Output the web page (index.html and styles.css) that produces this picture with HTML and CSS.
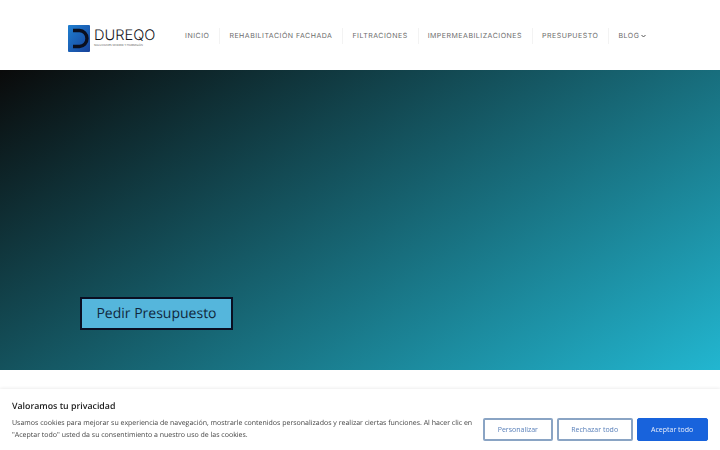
FILE: index.html
```html
<!DOCTYPE html>
<html lang="es">
<head>
<meta charset="utf-8">
<title>Dureqo</title>
<link rel="stylesheet" href="styles.css">
</head>
<body>
<header class="header">
  <a class="logo" href="#">
    <svg class="logo-mark" width="22" height="27" viewBox="0 0 22 27" aria-hidden="true">
      <defs>
        <linearGradient id="lg" x1="0" y1="0" x2="1" y2="1">
          <stop offset="0" stop-color="#1f7fd0"/>
          <stop offset="1" stop-color="#17419a"/>
        </linearGradient>
      </defs>
      <rect width="22" height="27" rx="1" fill="url(#lg)"/>
      <path d="M5 5.5h6.5a7.5 8 0 0 1 0 16H5" fill="none" stroke="#0b0f1e" stroke-width="3.4"/>
    </svg>
    <span class="logo-text">
      <span class="logo-name">DUREQO</span>
      <span class="logo-tag">SOLUCIONES MADRID Y HORMIGÓN</span>
    </span>
  </a>
  <nav class="nav">
    <a class="nav-item" href="#">INICIO</a>
    <a class="nav-item" href="#">REHABILITACIÓN FACHADA</a>
    <a class="nav-item" href="#">FILTRACIONES</a>
    <a class="nav-item" href="#">IMPERMEABILIZACIONES</a>
    <a class="nav-item" href="#">PRESUPUESTO</a>
    <a class="nav-item" href="#">BLOG
      <svg class="chev" width="5" height="4" viewBox="0 0 5 4" aria-hidden="true"><path d="M.5 1l2 2 2-2" fill="none" stroke="#555" stroke-width="1"/></svg>
    </a>
  </nav>
</header>
<main class="hero">
  <a class="cta" href="#">Pedir Presupuesto</a>
</main>
<section class="after"></section>
<aside class="cookie">
  <div class="cookie-copy">
    <h2 class="cookie-title">Valoramos tu privacidad</h2>
    <p class="cookie-text">Usamos cookies para mejorar su experiencia de navegación, mostrarle contenidos personalizados y realizar ciertas funciones. Al hacer clic en "Aceptar todo" usted da su consentimiento a nuestro uso de las cookies.</p>
  </div>
  <div class="cookie-actions">
    <button class="btn btn-custom">Personalizar</button>
    <button class="btn btn-reject">Rechazar todo</button>
    <button class="btn btn-accept">Aceptar todo</button>
  </div>
</aside>
</body>
</html>
```
FILE: styles.css
```css
* { box-sizing: border-box; }
html, body { margin: 0; padding: 0; height: 450px; overflow: hidden; background: #fff; }
body { font-family: "Open Sans", sans-serif; text-rendering: geometricPrecision; }
a { text-decoration: none; }

.header { height: 70px; display: flex; align-items: center; padding-left: 68px; background: #fff; }
.logo { display: flex; align-items: flex-start; gap: 4px; width: 107px; margin-top: 7px; }
.logo-mark { flex: none; }
.logo-text { display: flex; flex-direction: column; padding-top: 3px; }
.logo-name { font: 300 14.6px/15px Inter, sans-serif; color: #14161c; white-space: nowrap; }
.logo-tag { font: 400 2.9px/4px "Open Sans", sans-serif; color: #555; white-space: nowrap; }

.nav { display: flex; align-items: center; margin-top: 1px; }
.nav-item { display: flex; align-items: center; gap: 2px; height: 16px; padding: 0 10px 0 9px; font: 400 7px/16px Inter, sans-serif; letter-spacing: .5px; color: #6c6c6c; border-left: 1px solid #f3f3f3; white-space: nowrap; }
.nav-item:first-child { border-left: 0; padding-left: 10px; }

.hero { height: 300px; padding: 227px 0 0 80px; background: linear-gradient(150deg, #0a0a0a 0%, #22b6d0 100%); }
.cta { display: block; width: 153px; height: 33px; background: #55b6dc; border: 2px solid #0a0f22; font: 400 14px/29px "Open Sans", sans-serif; color: #10283c; text-align: center; }

.after { height: 80px; background: #fff; }

.cookie { position: fixed; left: 0; right: 0; bottom: 0; height: 61px; display: flex; align-items: flex-start; gap: 9px; padding: 9px 12px 0; background: #fff; box-shadow: 0 -1px 3px rgba(0, 0, 0, .07); }
.cookie-copy { width: 462px; flex: none; }
.cookie-title { margin: 0 0 4px; font: 600 8.8px/16px "Open Sans", sans-serif; color: #1c1c1c; }
.cookie-text { margin: 0; font: 400 7px/12px "Open Sans", sans-serif; color: #444; }
.cookie-actions { display: flex; gap: 4px; margin-top: 20px; }
.btn { height: 23px; border-radius: 2px; font: 400 7px/1 "Open Sans", sans-serif; padding: 0; }
.btn-custom { width: 69.7px; background: #fff; border: 2px solid #8aa4c4; color: #5a80ba; }
.btn-reject { width: 76px; background: #fff; border: 2px solid #8aa4c4; color: #5a80ba; }
.btn-accept { width: 71px; background: #1863dc; border: 1px solid #1863dc; color: #e8eefb; }
```
